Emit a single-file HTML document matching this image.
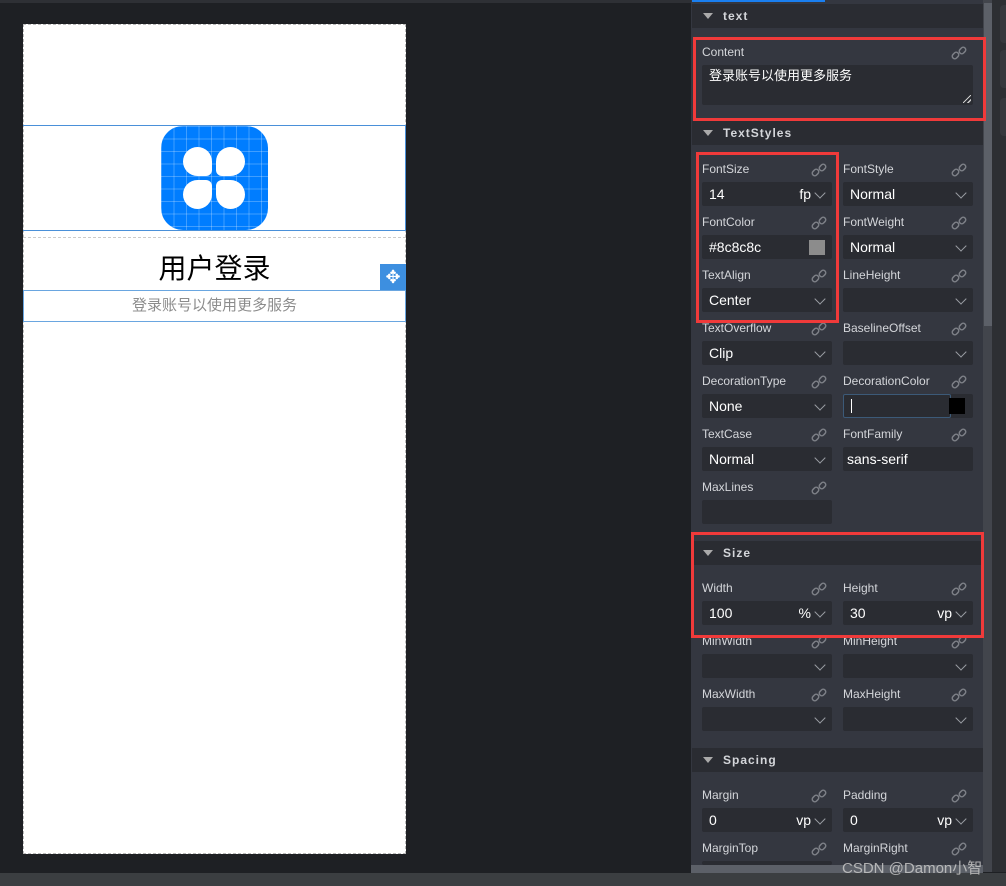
<!DOCTYPE html>
<html><head><meta charset="utf-8"><style>
*{margin:0;padding:0;box-sizing:border-box}
body{width:1006px;height:886px;background:#1e2024;position:relative;overflow:hidden;font-family:"Liberation Sans","Noto Sans CJK SC",sans-serif}
.a{position:absolute}
.phone{left:23px;top:24px;width:383px;height:830px;background:#fff;border:1px dashed #bbb}
.lbl{position:absolute;color:#d4d6da;font-size:12px}
.fld{position:absolute;height:24px;background:#2a2c32;border-radius:2px;color:#fff;font-size:14px;line-height:24px;padding-left:7px}
.chev{position:absolute;right:8px;top:7px;width:8px;height:8px;border-right:1px solid #9a9da3;border-bottom:1px solid #9a9da3;transform:rotate(45deg)}
.unit{position:absolute;right:21px;top:0;font-size:14px;color:#fff}
.hdr{position:absolute;left:692px;width:291px;height:24px;background:#2a2c32;color:#d4d6da;font-size:12px;font-weight:bold;letter-spacing:1px;line-height:24px;padding-left:31px}
.hdr:before{content:"";position:absolute;left:11px;top:9px;border-left:5px solid transparent;border-right:5px solid transparent;border-top:6px solid #aaa}
.red{position:absolute;border:3px solid #f03a3a}
</style></head><body>
<div class="a phone"></div>
<div class="a" style="left:23px;top:125px;width:383px;height:106px;border-top:1px solid #4a90d9;border-bottom:1px solid #4a90d9;border-right:1px solid #4a90d9"></div>
<div class="a" style="left:161px;top:126px;width:107px;height:104px;border-radius:22px;background-color:#007dff;background-image:linear-gradient(90deg,rgba(255,255,255,.25) 1px,transparent 1px),linear-gradient(rgba(255,255,255,.25) 1px,transparent 1px);background-size:12.5px 12.5px;overflow:hidden">
<div class="a" style="left:22px;top:21px;width:29px;height:29px;background:#fff;border-radius:50% 50% 6px 50%"></div>
<div class="a" style="left:55px;top:21px;width:29px;height:29px;background:#fff;border-radius:50% 50% 50% 6px"></div>
<div class="a" style="left:22px;top:54px;width:29px;height:29px;background:#fff;border-radius:50% 6px 50% 50%"></div>
<div class="a" style="left:55px;top:54px;width:29px;height:29px;background:#fff;border-radius:6px 50% 50% 50%"></div>
</div>
<div class="a" style="left:23px;top:237px;width:383px;height:53px;border-top:1px dashed #ccc"></div>
<div class="a" style="left:23px;top:247px;width:383px;text-align:center;font-size:28px;color:#000">用户登录</div>
<div class="a" style="left:23px;top:290px;width:383px;height:32px;border:1px solid #6aa6e0;text-align:center;font-size:15px;color:#8c8c8c;line-height:30px">登录账号以使用更多服务</div>
<div class="a" style="left:380px;top:264px;width:26px;height:26px;background:#3d8fe0;color:#fff;font-size:18px;text-align:center;line-height:26px">✥</div>

<div class="a" style="left:0;top:0;width:1006px;height:3px;background:#2e3035"></div>
<div class="a" style="left:691px;top:0;width:293px;height:872px;background:#343740"></div>
<div class="a" style="left:692px;top:0;width:133px;height:2px;background:#1a7ff0"></div>
<div class="a" style="left:983px;top:0;width:9px;height:872px;background:#42454c"></div>
<div class="a" style="left:984px;top:3px;width:8px;height:323px;background:#5c6068"></div>
<div class="a" style="left:992px;top:0;width:14px;height:872px;background:#2d2f33"></div>
<div class="a" style="left:1000px;top:5px;width:10px;height:38px;background:#36383d;border-radius:4px"></div>
<div class="a" style="left:1000px;top:50px;width:10px;height:38px;background:#36383d;border-radius:4px"></div>
<div class="a" style="left:1000px;top:98px;width:10px;height:38px;background:#36383d;border-radius:4px"></div>
<div class="a" style="left:691px;top:865px;width:292px;height:8px;background:#5c6068"></div>
<div class="a" style="left:0;top:873px;width:1006px;height:13px;background:#3b3e41"></div>

<div class="hdr" style="top:4px">text</div>
<div class="lbl" style="left:702px;top:45px">Content</div>
<div class="fld" style="left:702px;top:65px;width:271px;height:40px;line-height:20px;font-size:13px;padding-top:1px">登录账号以使用更多服务<span class="a" style="right:2px;bottom:2px;width:8px;height:8px;background:linear-gradient(135deg,transparent 45%,#ccc 45%,#ccc 55%,transparent 55%,transparent 75%,#ccc 75%,#ccc 85%,transparent 85%)"></span></div>
<div class="hdr" style="top:121px">TextStyles</div>

<div class="lbl" style="left:702px;top:162px">FontSize</div><div class="fld" style="left:702px;top:182px;width:130px">14<span class="unit">fp</span><i class="chev"></i></div>
<div class="lbl" style="left:843px;top:162px">FontStyle</div><div class="fld" style="left:843px;top:182px;width:130px">Normal<i class="chev"></i></div>
<div class="lbl" style="left:702px;top:215px">FontColor</div><div class="fld" style="left:702px;top:235px;width:130px">#8c8c8c<span class="a" style="left:107px;top:5px;width:16px;height:15px;background:#8c8c8c"></span></div>
<div class="lbl" style="left:843px;top:215px">FontWeight</div><div class="fld" style="left:843px;top:235px;width:130px">Normal<i class="chev"></i></div>
<div class="lbl" style="left:702px;top:268px">TextAlign</div><div class="fld" style="left:702px;top:288px;width:130px">Center<i class="chev"></i></div>
<div class="lbl" style="left:843px;top:268px">LineHeight</div><div class="fld" style="left:843px;top:288px;width:130px"><i class="chev"></i></div>
<div class="lbl" style="left:702px;top:321px">TextOverflow</div><div class="fld" style="left:702px;top:341px;width:130px">Clip<i class="chev"></i></div>
<div class="lbl" style="left:843px;top:321px">BaselineOffset</div><div class="fld" style="left:843px;top:341px;width:130px"><i class="chev"></i></div>
<div class="lbl" style="left:702px;top:374px">DecorationType</div><div class="fld" style="left:702px;top:394px;width:130px">None<i class="chev"></i></div>
<div class="lbl" style="left:843px;top:374px">DecorationColor</div><div class="fld" style="left:843px;top:394px;width:130px"><span class="a" style="left:0;top:0;width:108px;height:24px;border:1px solid #3c5a78;border-radius:2px"></span><span class="a" style="left:8px;top:5px;width:1px;height:14px;background:#fff"></span><span class="a" style="left:106px;top:4px;width:16px;height:16px;background:#000"></span></div>
<div class="lbl" style="left:702px;top:427px">TextCase</div><div class="fld" style="left:702px;top:447px;width:130px">Normal<i class="chev"></i></div>
<div class="lbl" style="left:843px;top:427px">FontFamily</div><div class="fld" style="left:843px;top:447px;width:130px;padding-left:4px">sans-serif</div>
<div class="lbl" style="left:702px;top:480px">MaxLines</div><div class="fld" style="left:702px;top:500px;width:130px"></div>

<div class="hdr" style="top:541px">Size</div>
<div class="lbl" style="left:702px;top:581px">Width</div><div class="fld" style="left:702px;top:601px;width:130px">100<span class="unit">%</span><i class="chev"></i></div>
<div class="lbl" style="left:843px;top:581px">Height</div><div class="fld" style="left:843px;top:601px;width:130px">30<span class="unit">vp</span><i class="chev"></i></div>
<div class="lbl" style="left:702px;top:634px">MinWidth</div><div class="fld" style="left:702px;top:654px;width:130px"><i class="chev"></i></div>
<div class="lbl" style="left:843px;top:634px">MinHeight</div><div class="fld" style="left:843px;top:654px;width:130px"><i class="chev"></i></div>
<div class="lbl" style="left:702px;top:687px">MaxWidth</div><div class="fld" style="left:702px;top:707px;width:130px"><i class="chev"></i></div>
<div class="lbl" style="left:843px;top:687px">MaxHeight</div><div class="fld" style="left:843px;top:707px;width:130px"><i class="chev"></i></div>
<div class="hdr" style="top:748px">Spacing</div>
<div class="lbl" style="left:702px;top:788px">Margin</div><div class="fld" style="left:702px;top:808px;width:130px">0<span class="unit">vp</span><i class="chev"></i></div>
<div class="lbl" style="left:843px;top:788px">Padding</div><div class="fld" style="left:843px;top:808px;width:130px">0<span class="unit">vp</span><i class="chev"></i></div>
<div class="lbl" style="left:702px;top:841px">MarginTop</div><div class="fld" style="left:702px;top:861px;width:130px;height:4px"></div>
<div class="lbl" style="left:843px;top:841px">MarginRight</div>
<div class="a" style="left:842px;top:857px;color:#c8c8c8;font-size:15px;opacity:.85">CSDN @Damon小智</div>

<svg class="a" style="left:0;top:0" width="1006" height="886" fill="none" stroke="#7d8087" stroke-width="1.5">
<defs><g id="L"><rect x="-1" y="4" width="7" height="5" rx="2.5" transform="rotate(-45 2.5 6.5)"/><rect x="6" y="-1" width="7" height="5" rx="2.5" transform="rotate(-45 9.5 1.5)"/></g></defs>
<use href="#L" x="953" y="49"/>
<use href="#L" x="813" y="166"/><use href="#L" x="953" y="166"/>
<use href="#L" x="813" y="219"/><use href="#L" x="953" y="219"/>
<use href="#L" x="813" y="272"/><use href="#L" x="953" y="272"/>
<use href="#L" x="813" y="325"/><use href="#L" x="953" y="325"/>
<use href="#L" x="813" y="378"/><use href="#L" x="953" y="378"/>
<use href="#L" x="813" y="431"/><use href="#L" x="953" y="431"/>
<use href="#L" x="813" y="484"/>
<use href="#L" x="813" y="585"/><use href="#L" x="953" y="585"/>
<use href="#L" x="813" y="638"/><use href="#L" x="953" y="638"/>
<use href="#L" x="813" y="691"/><use href="#L" x="953" y="691"/>
<use href="#L" x="813" y="792"/><use href="#L" x="953" y="792"/>
<use href="#L" x="813" y="845"/><use href="#L" x="953" y="845"/>
</svg>

<div class="red" style="left:693px;top:37px;width:293px;height:84px"></div>
<div class="red" style="left:696px;top:152px;width:143px;height:171px"></div>
<div class="red" style="left:691px;top:532px;width:293px;height:106px"></div>
</body></html>
